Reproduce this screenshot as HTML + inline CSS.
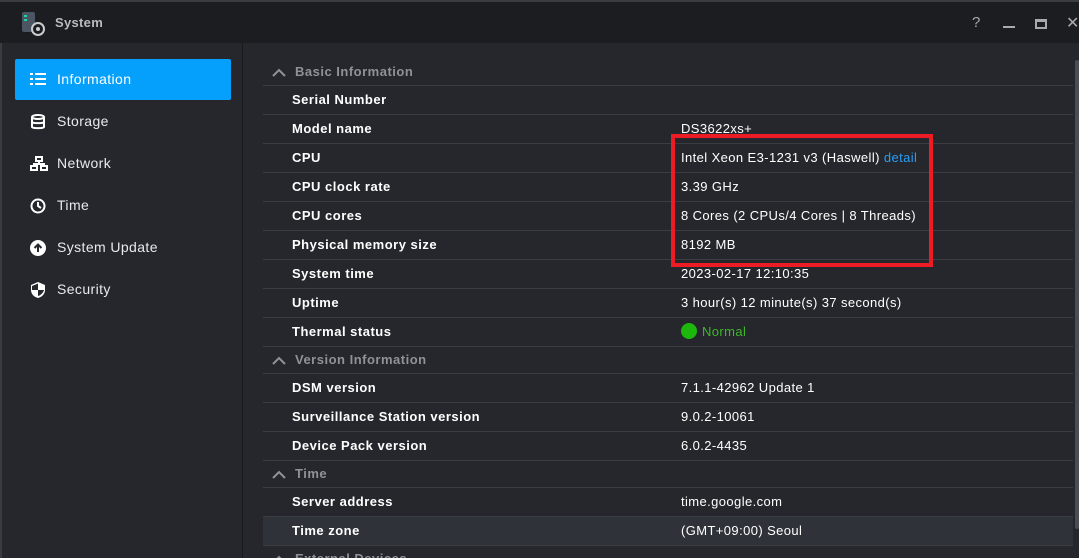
<!DOCTYPE html>
<html><head><meta charset="utf-8"><style>
*{margin:0;padding:0;box-sizing:border-box}
html,body{width:1079px;height:558px;overflow:hidden;background:#25272c;font-family:"Liberation Sans",Tahoma,sans-serif;color:#fff}
body{position:relative}
.title{position:absolute;left:0;top:0;width:1079px;height:43px;background:#1b1d21;border-top:2px solid #3a3c40}
.title .t{position:absolute;left:55px;top:13px;font-size:13px;font-weight:bold;color:#b8bbc0;letter-spacing:0.3px}
.side{position:absolute;left:0;top:43px;width:243px;height:515px;border-right:1px solid #17191c;border-left:2px solid #3a3c40}
.item{position:absolute;left:13px;width:216px;height:41px;font-size:14px;line-height:41px;padding-left:42px;color:#e8eaee;letter-spacing:0.4px}
.item.sel{background:#05a0fb;border-radius:2px;color:#fff}
.item svg{position:absolute;left:15px;top:13px}
.main{position:absolute;left:263px;top:59px;width:810px}
.row{height:29px;border-bottom:1px solid #3a3d42;font-size:13px;line-height:28px;position:relative}
.row .l{position:absolute;left:29px;font-weight:bold;color:#fff;letter-spacing:0.5px}
.row .v{position:absolute;left:418px;color:#fff;letter-spacing:0.4px}
.hdr{height:27px;line-height:26px;border-bottom:1px solid #3a3d42;font-size:13px;font-weight:bold;color:#8f9296;position:relative;letter-spacing:0.5px}
.hdr span{position:absolute;left:32px}
.hdr svg{position:absolute;left:9px;top:9px}
.hl{background:#2f3239}
.scroll{position:absolute;left:1075px;top:60px;width:4px;height:469px;background:#4a4d53;border-radius:2px}
.red{position:absolute;left:671px;top:134px;width:262px;height:133px;border:4px solid #ed1c24}
</style></head><body>
<div class="title">
<svg style="position:absolute;left:22px;top:10px" width="24" height="24" viewBox="0 0 24 24"><rect x="0" y="0" width="13" height="20" rx="2" fill="#4b5563"/><rect x="2" y="3" width="3" height="2" fill="#22d3a0"/><rect x="2" y="7" width="3" height="2" fill="#22d3a0"/><circle cx="16" cy="17" r="6" fill="#1b1d21" stroke="#ccc" stroke-width="2"/><circle cx="16" cy="17" r="2" fill="#ccc"/></svg>
<div class="t">System</div>
<div style="position:absolute;left:972px;top:12px;color:#aaa;font-size:15px">?</div>
<div style="position:absolute;left:1003px;top:24px;width:12px;height:2px;background:#aaa"></div>
<div style="position:absolute;left:1035px;top:17px;width:12px;height:10px;border:2px solid #aaa;border-top-width:3px"></div>
<div style="position:absolute;left:1066px;top:11px;color:#aaa;font-size:16px">✕</div>
</div>
<div class="side">
<div class="item sel" style="top:16px"><svg width="16" height="14"><g fill="#fff"><rect x="0" y="1" width="3" height="2"/><rect x="5" y="1" width="11" height="2"/><rect x="0" y="6" width="3" height="2"/><rect x="5" y="6" width="11" height="2"/><rect x="0" y="11" width="3" height="2"/><rect x="5" y="11" width="11" height="2"/></g></svg>Information</div>
<div class="item" style="top:58px"><svg width="16" height="16"><g fill="none" stroke="#fff" stroke-width="2"><ellipse cx="8" cy="3" rx="6" ry="2"/><path d="M2 3v10c0 1.5 12 1.5 12 0V3M2 8c0 1.5 12 1.5 12 0"/></g></svg>Storage</div>
<div class="item" style="top:100px"><svg width="18" height="16"><g fill="none" stroke="#fff" stroke-width="2"><rect x="6" y="1" width="6" height="4"/><rect x="1" y="10" width="6" height="4"/><rect x="11" y="10" width="6" height="4"/><path d="M9 5v3M4 10V8h10v2"/></g></svg>Network</div>
<div class="item" style="top:142px"><svg width="16" height="16"><circle cx="8" cy="8" r="6.5" fill="none" stroke="#fff" stroke-width="2"/><path d="M8 4v4l3 2" fill="none" stroke="#fff" stroke-width="2"/></svg>Time</div>
<div class="item" style="top:184px"><svg width="16" height="16"><circle cx="8" cy="8" r="8" fill="#fff"/><path d="M8 12V5M4.5 8L8 4.5 11.5 8" fill="none" stroke="#25272c" stroke-width="2"/></svg>System Update</div>
<div class="item" style="top:226px"><svg width="16" height="16"><path d="M8 0L15 3v5c0 4-3 7-7 8-4-1-7-4-7-8V3z" fill="#fff"/><path d="M8 8h6c-1 3-3 5-6 6zM2 8V4l6-2.5V8z" fill="#25272c"/></svg>Security</div>
</div>
<div class="main">
<div class="hdr"><svg width="14" height="9"><path d="M1 8L7 2l6 6" fill="none" stroke="#8f9296" stroke-width="2"/></svg><span>Basic Information</span></div>
<div class="row"><span class="l">Serial Number</span></div>
<div class="row"><span class="l">Model name</span><span class="v">DS3622xs+</span></div>
<div class="row"><span class="l">CPU</span><span class="v">Intel Xeon E3-1231 v3 (Haswell) <span style="color:#2a9df4">detail</span></span></div>
<div class="row"><span class="l">CPU clock rate</span><span class="v">3.39 GHz</span></div>
<div class="row"><span class="l">CPU cores</span><span class="v">8 Cores (2 CPUs/4 Cores | 8 Threads)</span></div>
<div class="row"><span class="l">Physical memory size</span><span class="v">8192 MB</span></div>
<div class="row"><span class="l">System time</span><span class="v">2023-02-17 12:10:35</span></div>
<div class="row"><span class="l">Uptime</span><span class="v">3 hour(s) 12 minute(s) 37 second(s)</span></div>
<div class="row"><span class="l">Thermal status</span><span class="v" style="color:#3cb728"><span style="display:inline-block;width:16px;height:16px;border-radius:50%;background:#1db80c;vertical-align:-3px;margin-right:5px"></span>Normal</span></div>
<div class="hdr"><svg width="14" height="9"><path d="M1 8L7 2l6 6" fill="none" stroke="#8f9296" stroke-width="2"/></svg><span>Version Information</span></div>
<div class="row"><span class="l">DSM version</span><span class="v">7.1.1-42962 Update 1</span></div>
<div class="row"><span class="l">Surveillance Station version</span><span class="v">9.0.2-10061</span></div>
<div class="row"><span class="l">Device Pack version</span><span class="v">6.0.2-4435</span></div>
<div class="hdr"><svg width="14" height="9"><path d="M1 8L7 2l6 6" fill="none" stroke="#8f9296" stroke-width="2"/></svg><span>Time</span></div>
<div class="row"><span class="l">Server address</span><span class="v">time.google.com</span></div>
<div class="row hl"><span class="l">Time zone</span><span class="v">(GMT+09:00) Seoul</span></div>
<div class="hdr"><svg width="14" height="9"><path d="M1 8L7 2l6 6" fill="none" stroke="#8f9296" stroke-width="2"/></svg><span>External Devices</span></div>
</div>
<div class="scroll"></div>
<div class="red"></div>
</body></html>
